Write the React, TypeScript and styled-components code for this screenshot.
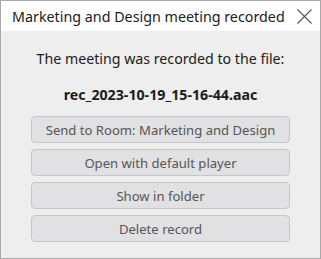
import styled, { createGlobalStyle } from "styled-components";

const GlobalStyle = createGlobalStyle`
  html, body {
    margin: 0;
    padding: 0;
    background: #ffffff;
  }
  * {
    box-sizing: border-box;
  }
`;

const Window = styled.div`
  display: flex;
  flex-direction: column;
  width: 321px;
  height: 259px;
  border: 1px solid #a9a9a9;
  background-color: #eeeeee;
  font-family: "Noto Sans", "Open Sans", sans-serif;
`;

const TitleBar = styled.div`
  display: flex;
  align-items: center;
  justify-content: space-between;
  height: 30px;
  padding: 0 8px 0 11px;

  background-color: #ffffff;
`;

const Title = styled.span`
  color: #1b1b1b;
  font-size: 14.3px;
  white-space: nowrap;
`;

const CloseButton = styled.button`
  display: flex;
  align-items: center;
  justify-content: center;
  width: 16px;
  height: 16px;
  padding: 0;

  border: none;
  background: none;
`;

const Body = styled.div`
  display: flex;
  flex-direction: column;
  align-items: center;
  padding-top: 18px;
`;

const Message = styled.p`
  margin: 0;
  color: #1b1b1b;
  font-size: 14.2px;
  line-height: 20px;
  white-space: nowrap;
`;

const FileName = styled.p`
  margin: 16px 0 0;
  color: #1b1b1b;
  font-size: 14.2px;
  font-weight: 700;
  line-height: 20px;
  white-space: nowrap;
`;

const Actions = styled.div`
  display: flex;
  flex-direction: column;
  gap: 6px;
  margin-top: 11px;
`;

const ActionButton = styled.button`
  width: 259px;
  height: 27px;
  padding: 0;

  border: 1px solid #c6c6c8;
  border-radius: 4px;
  background-color: #e1e1e3;
  color: #555555;
  font-family: "Noto Sans", "Open Sans", sans-serif;
  font-size: 13.1px;
  white-space: nowrap;
`;

const actions = [
  "Send to Room: Marketing and Design",
  "Open with default player",
  "Show in folder",
  "Delete record",
];

const App = () => {
  return (
    <>
      <GlobalStyle />
      <Window>
        <TitleBar>
          <Title>Marketing and Design meeting recorded</Title>
          <CloseButton aria-label="Close">
            <svg width="16" height="16" viewBox="0 0 16 16">
              <path d="M1.5 1.5L15.5 15.5M15.5 1.5L1.5 15.5" stroke="#555555" strokeWidth="1.1" />
            </svg>
          </CloseButton>
        </TitleBar>
        <Body>
          <Message>The meeting was recorded to the file:</Message>
          <FileName>rec_2023-10-19_15-16-44.aac</FileName>
          <Actions>
            {actions.map((label) => (
              <ActionButton key={label}>{label}</ActionButton>
            ))}
          </Actions>
        </Body>
      </Window>
    </>
  );
};

export default App;
